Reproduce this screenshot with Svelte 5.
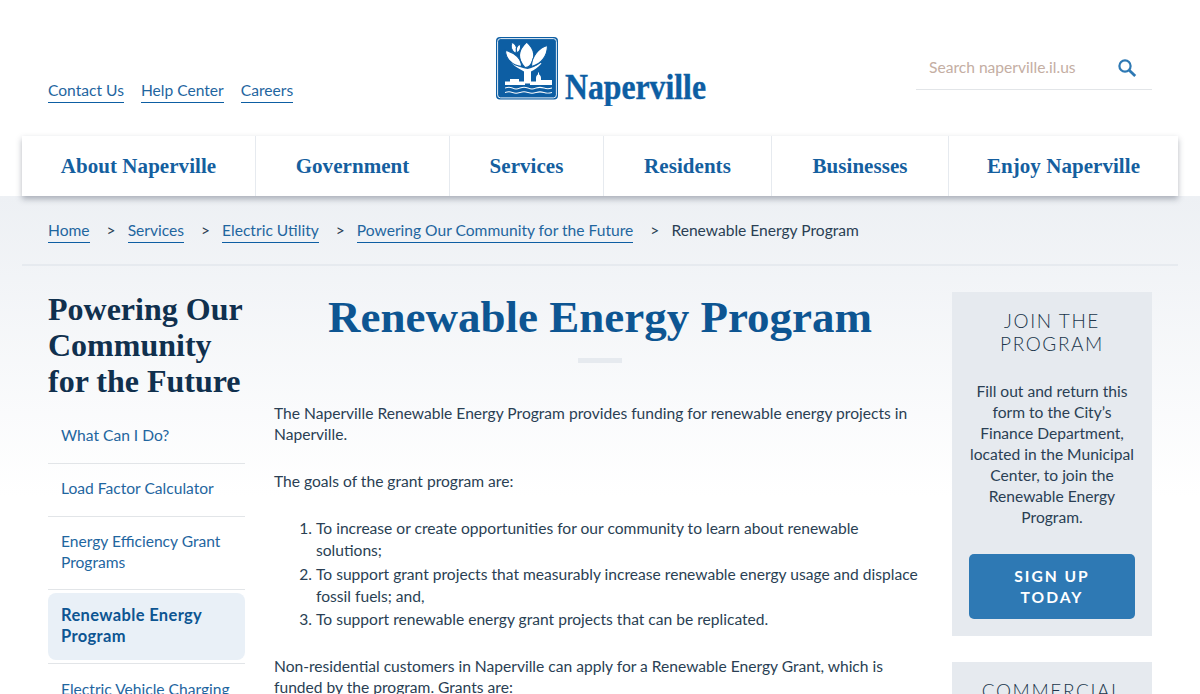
<script>
  const topLinks = ['Contact Us', 'Help Center', 'Careers'];
  const navItems = ['About Naperville', 'Government', 'Services', 'Residents', 'Businesses', 'Enjoy Naperville'];
  const crumbs = ['Home', 'Services', 'Electric Utility', 'Powering Our Community for the Future'];
  const sideLinks = [
    { label: 'What Can I Do?' },
    { label: 'Load Factor Calculator' },
    { label: 'Energy Efficiency Grant Programs' },
    { label: 'Renewable Energy Program', active: true },
    { label: 'Electric Vehicle Charging Stations' },
  ];
</script>

<div class="page">
  <header class="top">
    <nav class="util">
      {#each topLinks as link}
        <a href="#top">{link}</a>
      {/each}
    </nav>

    <a class="logo" href="#top" aria-label="Naperville">
      <svg width="230" height="70" viewBox="0 0 230 70">
        <rect x="1" y="1" width="62" height="62.5" rx="4" fill="#0d5ea3" />
        <rect x="2.6" y="2.6" width="58.8" height="59.3" rx="3" fill="none" stroke="#fff" stroke-width="0.9" />
        <path d="M16.5 27C21 31.5 25 33 29 35.5L29 47.5L36 47.5L36 35.5C39 34 43 31.5 46.5 27.5L45.5 27C41 30 36 32.5 32.5 33C28 32.5 22 30.5 17 26.5Z" fill="#fff" />
        <g fill="#fff" stroke="#0d5ea3" stroke-width="1.1">
          <path d="M31.7 6C24 13 21.5 22 30 31.5C32 31.5 33.5 31 34.5 30C41.5 21 39.5 13 31.7 6Z" />
          <path d="M10.5 14.5C10.5 22 16.5 29.5 26.5 30.5C26.5 23 20 16.5 10.5 14.5Z" />
          <path d="M52.5 9.5C44 11.5 36.5 20.5 36.5 30.5C46 28.5 52.5 20 52.5 9.5Z" />
          <path d="M17.4 6C15 10 16.5 14.5 20.5 17.5C23 13.5 21.5 9 17.4 6Z" />
          <path d="M25 8C21.5 10 20.5 13.5 22 17C25 15 26.5 12 25 8Z" />
        </g>
        <g fill="#fff">
          <path d="M10 45.5L15 45.5L15 43L24 43L24 45.5L30 45.5L30 49L10 49Z" />
          <path d="M35 45.5L41 45.5L41 42C41 40 42 39 43 38.2L43 36.5L44 36.5L44 38.2C45 39 46 40 46 42L46 44L57 44L57 49L35 49Z" />
          <path d="M10 51.6C13 50.4 15 50.4 17.5 51.6S22 52.8 25 51.6S30 50.4 33 51.6S38 52.8 41 51.6S46 50.4 49 51.6S54 52.4 57 51.6L57 52.6C54 53.4 51 53.2 49 52.6S44 51.4 41 52.6S36 53.8 33 52.6S28 51.4 25 52.6S20 53.8 17.5 52.6S13 51.4 10 52.6Z" />
          <path d="M10 56C13 55 15 55 17.5 56S22 57 25 56S30 55 33 56S38 57 41 56S46 55 49 56S54 56.8 57 56L57 57C54 57.8 51 57.6 49 57S44 56 41 57S36 58 33 57S28 56 25 57S20 58 17.5 57S13 56 10 57Z" />
        </g>
        <text class="logo-word" x="70" y="63" textLength="141" lengthAdjust="spacingAndGlyphs">Naperville</text>
      </svg>
    </a>

    <form class="search" onsubmit={(e) => e.preventDefault()}>
      <input type="text" placeholder="Search naperville.il.us" />
      <button type="submit" aria-label="Search">
        <svg width="20" height="20" viewBox="0 0 20 20" fill="none" stroke="#2e79b4">
          <circle cx="8" cy="8" r="5.6" stroke-width="2.2" />
          <path d="M12.2 12.2L18.2 18" stroke-width="2.8" />
        </svg>
      </button>
    </form>
  </header>

  <div class="nav-wrap">
    <nav class="mainnav">
      {#each navItems as item}
        <a href="#top">{item}</a>
      {/each}
    </nav>
  </div>

  <div class="shade">
    <div class="crumbs">
      {#each crumbs as c}
        <a href="#top">{c}</a>
        <span class="sep">&gt;</span>
      {/each}
      <span>Renewable Energy Program</span>
    </div>

    <div class="columns">
      <aside class="side">
        <h2>Powering Our Community for the Future</h2>
        <ul>
          {#each sideLinks as s}
            <li class:active={s.active}><a href="#top">{s.label}</a></li>
          {/each}
        </ul>
      </aside>

      <main class="content">
        <h1>Renewable Energy Program</h1>
        <div class="rule"></div>
        <p>The Naperville Renewable Energy Program provides funding for renewable energy projects in Naperville.</p>
        <p>The goals of the grant program are:</p>
        <ol>
          <li>To increase or create opportunities for our community to learn about renewable solutions;</li>
          <li>To support grant projects that measurably increase renewable energy usage and displace fossil fuels; and,</li>
          <li>To support renewable energy grant projects that can be replicated.</li>
        </ol>
        <p>Non-residential customers in Naperville can apply for a Renewable Energy Grant, which is funded by the program. Grants are:</p>
      </main>

      <aside class="cards">
        <section class="card">
          <h3>Join the Program</h3>
          <p>Fill out and return this form to the City’s Finance Department, located in the Municipal Center, to join the Renewable Energy Program.</p>
          <a class="btn" href="#top">Sign Up Today</a>
        </section>
        <section class="card">
          <h3>Commercial</h3>
        </section>
      </aside>
    </div>
  </div>
</div>

<style>
  :global(html), :global(body) {
    height: 694px;
    overflow: hidden;
    background: #fff;
  }

  .page {
    font-family: Lato, sans-serif;
    font-size: 15.6px;
    color: #2a3f54;
    line-height: 21px;
  }

  a {
    color: #1f669f;
    text-decoration: none;
  }

  .top {
    display: grid;
    grid-template-columns: 1fr 212px 1fr;
    height: 136px;
    padding: 0 48px;
    box-sizing: border-box;
  }

  .util {
    display: flex;
    gap: 17px;
    align-items: flex-start;
    padding-top: 80px;
  }

  .util a,
  .crumbs a {
    border-bottom: 1px solid #0d5ea3;
    padding-bottom: 1px;
  }

  .logo {
    padding-top: 36px;
    margin-left: 1px;
  }

  .logo svg {
    display: block;
  }

  .logo-word {
    font-family: "Liberation Serif", serif;
    font-weight: 700;
    font-size: 35px;
    fill: #0d5ea3;
    stroke: #0d5ea3;
    stroke-width: 0.4px;
  }

  .search {
    justify-self: end;
    width: 236px;
    height: 54px;
    margin-top: 36px;
    display: flex;
    align-items: center;
    border-bottom: 1px solid #e2e5e8;
    padding: 10px 15px 0 13px;
    box-sizing: border-box;
  }

  .search input {
    flex: 1;
    min-width: 0;
    border: 0;
    outline: 0;
    padding: 0;
    font: inherit;
    background: none;
  }

  .search input::placeholder {
    color: #c4aea3;
    opacity: 1;
  }

  .search button {
    border: 0;
    padding: 0;
    background: none;
    display: flex;
  }

  .nav-wrap {
    padding: 0 22px;
    position: relative;
    z-index: 1;
  }

  .mainnav {
    display: grid;
    grid-template-columns: 233px 194px 154px 168px 177px 1fr;
    height: 60px;
    background: #fff;
    box-shadow: 0 3px 6px rgba(40, 50, 70, 0.35);
  }

  .mainnav a {
    display: flex;
    align-items: center;
    justify-content: center;
    font-family: "Liberation Serif", serif;
    font-weight: 700;
    font-size: 21px;
    letter-spacing: 0.05px;
    color: #155f9f;
    border-left: 1px solid #e6eaef;
  }

  .mainnav a:first-child {
    border-left: 0;
  }

  .shade {
    background: linear-gradient(#edf0f4, #fff 300px);
  }

  .crumbs {
    margin: 0 22px;
    padding: 24px 26px 0;
    height: 70px;
    box-sizing: border-box;
    display: flex;
    align-items: flex-start;
    border-bottom: 2px solid #e6eaef;
  }

  .sep {
    margin: 0 12px 0 17px;
  }

  .columns {
    display: grid;
    grid-template-columns: 200px 652px 200px;
    column-gap: 26px;
    padding: 26px 48px 0;
  }

  .side {
    padding-right: 3px;
  }

  .side h2 {
    margin: -1px 0 11.75px;
    font-family: "Liberation Serif", serif;
    font-weight: 700;
    font-size: 32px;
    line-height: 36px;
    color: #10304e;
  }

  .side ul {
    list-style: none;
    margin: 0;
    padding: 0;
  }

  .side li {
    border-bottom: 1px solid #e2e5e8;
  }

  .side li a {
    display: block;
    line-height: 20.5px;
    padding: 14.5px 13px 17px;
    border-radius: 8px;
  }

  .side li.active {
    padding: 3px 0;
  }

  .side li.active a {
    background: #e9f0f7;
    color: #0d5592;
    font-size: 16.5px;
    font-weight: 700;
    letter-spacing: 0.35px;
    line-height: 21px;
    padding: 12px 13px 13px;
  }

  .content h1 {
    margin: 0;
    text-align: center;
    font-family: "Liberation Serif", serif;
    font-weight: 700;
    font-size: 45px;
    line-height: 50px;
    color: #0d5592;
  }

  .rule {
    width: 44px;
    height: 5px;
    margin: 16px auto 40px;
    background: #e6eaef;
  }

  .content p {
    margin: 0 0 26px;
  }

  .content ol {
    margin: -1px 0 26px;
    padding-left: 42px;
  }

  .content li {
    margin-bottom: 1.5px;
    line-height: 22px;
  }

  .card {
    background: #e6eaef;
    padding: 17px;
    margin-bottom: 26px;
    text-align: center;
  }

  .card h3 {
    margin: 0 0 26px;
    font-size: 19px;
    font-weight: 300;
    line-height: 23px;
    letter-spacing: 1.6px;
    text-transform: uppercase;
    color: #20364b;
  }

  .card p {
    margin: 0 0 26px;
  }

  .btn {
    display: block;
    padding: 12px 40px 11px;
    border-radius: 5px;
    background: #2e79b4;
    color: #fff;
    font-weight: 700;
    letter-spacing: 2px;
    text-transform: uppercase;
  }
</style>
